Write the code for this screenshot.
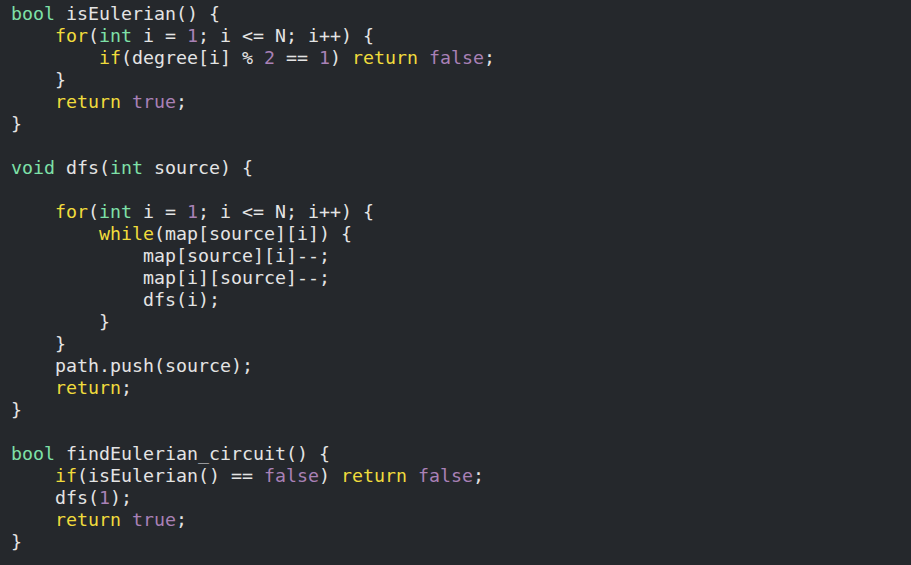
import React from "react";

// source shown in the editor, one string per line
const LINES = [
  "bool isEulerian() {",
  "    for(int i = 1; i <= N; i++) {",
  "        if(degree[i] % 2 == 1) return false;",
  "    }",
  "    return true;",
  "}",
  "",
  "void dfs(int source) {",
  "",
  "    for(int i = 1; i <= N; i++) {",
  "        while(map[source][i]) {",
  "            map[source][i]--;",
  "            map[i][source]--;",
  "            dfs(i);",
  "        }",
  "    }",
  "    path.push(source);",
  "    return;",
  "}",
  "",
  "bool findEulerian_circuit() {",
  "    if(isEulerian() == false) return false;",
  "    dfs(1);",
  "    return true;",
  "}",
];

const TYPES = ["bool", "void", "int"];
const KEYWORDS = ["for", "if", "return", "while"];
const LITERALS = ["true", "false"];

function colorFor(word) {
  if (TYPES.includes(word)) return "text-[#7ee0a8]";
  if (KEYWORDS.includes(word)) return "text-[#f0dc3c]";
  if (LITERALS.includes(word) || /^\d+$/.test(word)) return "text-[#a981b6]";
  return "";
}

function CodeLine({ text }) {
  // split into words and everything in between
  const parts = text.split(/(\w+)/);
  return (
    <div className="h-[22px] whitespace-pre">
      {parts.map((part, i) => (
        <span key={i} className={colorFor(part)}>
          {part}
        </span>
      ))}
      {text === "" && " "}
    </div>
  );
}

export default function App() {
  return (
    <div className="min-h-screen bg-[#25282c] text-[#e4e4e4] pl-[11px] pt-[3px] font-['DejaVu_Sans_Mono',monospace] text-[18.27px] leading-[22px]">
      {LINES.map((line, index) => (
        <CodeLine key={index} text={line} />
      ))}
    </div>
  );
}
